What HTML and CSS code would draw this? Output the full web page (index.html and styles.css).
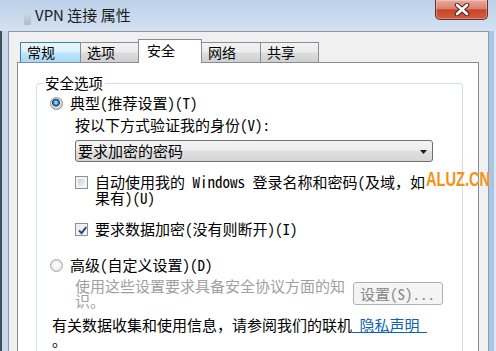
FILE: index.html
```html
<!DOCTYPE html>
<html lang="zh-CN">
<head>
<meta charset="utf-8">
<title>VPN 连接 属性</title>
<link rel="stylesheet" href="styles.css">
</head>
<body>
<div class="window">
  <div class="titlebar">
    <span class="app-icon"></span>
    <span class="title">VPN 连接 属性</span>
    <button class="close" type="button" aria-label="关闭">
      <svg width="16" height="13" viewBox="0 0 16 13">
        <path d="M3 2 L13 11 M13 2 L3 11" stroke="#4b2822" stroke-width="4.6" stroke-linecap="round" fill="none"/>
        <path d="M3 2 L13 11 M13 2 L3 11" stroke="#ffffff" stroke-width="2.6" stroke-linecap="round" fill="none"/>
      </svg>
    </button>
  </div>
  <div class="frame">
    <div class="client">
      <div class="tabs">
        <div class="tab tab-hover">常规</div>
        <div class="tab">选项</div>
        <div class="tab tab-active">安全</div>
        <div class="tab">网络</div>
        <div class="tab tab-last">共享</div>
      </div>
      <div class="panel">
        <fieldset class="group">
          <legend>安全选项</legend>
          <div class="radio-row"><span class="radio radio-on"></span><span>典型(推荐设置)(T)</span></div>
          <div class="sub">
            <div class="prompt">按以下方式验证我的身份(V):</div>
            <div class="combo">
              <span>要求加密的密码</span>
              <svg class="combo-arrow" width="7" height="4" viewBox="0 0 7 4"><path d="M0 0 H7 L3.5 4 Z" fill="#1a1a1a"/></svg>
            </div>
            <div class="check-row check-row-first"><span class="check"></span><span>自动使用我的 Windows 登录名称和密码(及域，如<br>果有)(U)</span></div>
            <div class="check-row check-row-second"><span class="check check-on"><svg width="9" height="9" viewBox="0 0 9 9"><path d="M1 4.4 L3.6 7.2 L8.2 1.2" stroke="#2c4585" stroke-width="2" fill="none"/></svg></span><span>要求数据加密(没有则断开)(I)</span></div>
          </div>
          <div class="radio-row radio-row-second"><span class="radio"></span><span>高级(自定义设置)(D)</span></div>
          <div class="advanced">
            <p class="disabled-text">使用这些设置要求具备安全协议方面的知<br>识。</p>
            <button class="btn" type="button" disabled>设置(S)...</button>
          </div>
          <p class="info">有关数据收集和使用信息，请参阅我们的联机<a href="#" class="link">&nbsp;隐私声明&nbsp;</a><br>。</p>
        </fieldset>
      </div>
    </div>
  </div>
  <div class="watermark">ALUZ.CN</div>
</div>
</body>
</html>
```

FILE: styles.css
```css
* { box-sizing: border-box; }
html, body { margin: 0; padding: 0; }
body {
  width: 496px;
  height: 351px;
  overflow: hidden;
  background: #c9d9ec;
  font-family: "Noto Sans Mono CJK SC", "Noto Sans CJK SC", sans-serif;
  font-size: 15px;
  color: #000;
}
.window {
  position: relative;
  width: 496px;
  height: 351px;
  display: flex;
  flex-direction: column;
  overflow: hidden;
  background: #c9d9ec;
}

/* title bar */
.titlebar {
  flex: none;
  height: 31px;
  display: flex;
  align-items: flex-start;
  padding-left: 24px;
  background: linear-gradient(#bcd0e8, #d4e2f0);
}
.app-icon {
  width: 7px;
  height: 12px;
  margin-top: 13px;
  border-radius: 1px;
  background: linear-gradient(#cfd6de, #a3adb9);
  opacity: 0.7;
}
.title {
  margin: 5px 0 0 4px;
  line-height: 20px;
  font-family: "Noto Sans CJK SC", sans-serif;
  font-size: 15px;
  color: #1b1b1b;
}
.close {
  margin-left: auto;
  margin-right: 8px;
  width: 53px;
  height: 20px;
  padding: 0;
  border: 1px solid #64302a;
  border-top: none;
  border-radius: 0 0 5px 5px;
  background: linear-gradient(#e8ab9c 0%, #dc806b 45%, #c8462c 52%, #d25c3f 100%);
  box-shadow: inset 0 0 0 1px rgba(255, 255, 255, 0.3);
  display: flex;
  align-items: center;
  justify-content: center;
}

/* frame + client */
.frame {
  flex: 1;
  display: flex;
  border-left: 2px solid #454d58;
  padding: 0 7px 0 6px;
  background: linear-gradient(to left, #dde8f4 0 2px, #a8c5e6 2px 7px, #c8d9ec 7px);
}
.client {
  flex: 1;
  display: flex;
  flex-direction: column;
  padding: 7px 0 0 8px;
  border: 1px solid #8d9aab;
  border-bottom: none;
  background: #f0f0f0;
}

/* tabs */
.tabs {
  flex: none;
  height: 23px;
  display: flex;
  align-items: flex-end;
  padding-left: 3px;
}
.tab {
  width: 60px;
  height: 20px;
  margin-left: -1px;
  padding-left: 6px;
  border: 1px solid #898c95;
  border-bottom: none;
  line-height: 19px;
  font-family: "Noto Sans CJK SC", sans-serif;
  font-size: 14px;
  background: linear-gradient(#f3f3f3 0%, #ebebeb 48%, #dddddd 52%, #cfcfcf 100%);
}
.tab:first-child { margin-left: 0; width: 61px; }
.tab-hover {
  border-color: #3c7fb1;
  background: linear-gradient(#eaf6fd 0%, #d9f0fc 48%, #bee6fd 52%, #a7d9f5 100%);
}
.tab-active {
  z-index: 1;
  width: 64px;
  height: 24px;
  margin-left: -2px;
  margin-bottom: -1px;
  padding-left: 8px;
  line-height: 20px;
  background: #ffffff;
}
.tab-last { width: 59px; }

/* panel */
.panel {
  flex: 1;
  width: 462px;
  border: 1px solid #898c95;
  border-bottom: none;
  background: #ffffff;
}
.group {
  margin: 10px 15px 0 18px;
  padding: 1px 0 0 0;
  min-width: 0;
  height: 400px;
  border: 1px solid #d5dfe5;
  border-radius: 3px;
}
.group legend {
  margin-left: 6px;
  padding: 0 2px;
  line-height: 20px;
  font-family: "Noto Sans CJK SC", sans-serif;
  font-size: 14.5px;
}

.radio-row {
  display: flex;
  align-items: center;
  gap: 7px;
  margin-left: 13px;
  line-height: 18px;
}
.radio-row-second { margin-top: 19px; }
.radio {
  flex: none;
  width: 13px;
  height: 13px;
  border: 1px solid #8e8f8f;
  border-radius: 50%;
  background: radial-gradient(circle, #f7f7f7 0 2.5px, #d8d8d8 5.5px);
}
.radio-row-second .radio {
  border-color: #a9aaaa;
  background: radial-gradient(circle, #fafafa 0 2.5px, #e0e0e0 5.5px);
}
.radio-on {
  background: radial-gradient(circle at 45% 42%, #9fdcf9 0 0.8px, #3b86c4 2.2px, #183f6c 3.6px, #eef0f2 4.3px, #d0d0d0 5.5px);
}

.sub { margin-left: 38px; }
.prompt { margin-top: 4px; line-height: 18px; }
.combo {
  margin-top: 6px;
  width: 358px;
  height: 22px;
  display: flex;
  align-items: center;
  justify-content: space-between;
  padding: 0 5px 0 2px;
  border: 1px solid #707070;
  border-radius: 3px;
  background: linear-gradient(#f4f4f4 0%, #ececec 48%, #dfdfdf 52%, #d6d6d6 100%);
  line-height: 20px;
}
.combo-arrow { flex: none; margin-top: 1px; }

.check-row {
  display: flex;
  align-items: flex-start;
  gap: 7px;
  line-height: 16px;
}
.check-row-first { margin-top: 12px; }
.check-row-second { margin-top: 15px; }
.check {
  flex: none;
  width: 13px;
  height: 13px;
  margin-top: 2px;
  padding: 2px;
  border: 1px solid #8e8f8f;
  background: linear-gradient(135deg, #c9ced6, #f4f5f7) content-box, #f4f4f4;
}
.check-on {
  padding: 1px;
  background: linear-gradient(135deg, #e4e7ec, #fbfbfb) content-box, #f4f4f4;
}
.check-on svg { display: block; margin: 1px 0 0 1px; }

.advanced {
  display: flex;
  align-items: flex-start;
  margin: 4px 0 0 38px;
}
.disabled-text {
  flex: none;
  width: 278px;
  margin: 0;
  line-height: 15px;
  color: #a0a0a0;
}
.btn {
  flex: none;
  width: 90px;
  height: 23px;
  margin-top: 4px;
  padding: 0 0 0 6px;
  text-align: left;
  font: inherit;
  line-height: 20px;
  color: #878787;
  border: 1px solid #adb2b5;
  border-radius: 3px;
  background: #f4f4f4;
}

.info {
  margin: 9px 0 0 15px;
  line-height: 15px;
}
.link {
  color: #0b63b8;
  text-decoration: underline;
}

.watermark {
  position: absolute;
  left: 426px;
  top: 170px;
  line-height: 1;
  font-family: "Liberation Sans", sans-serif;
  font-weight: bold;
  font-size: 19.5px;
  color: #f29219;
  transform: scaleX(0.75);
  transform-origin: left top;
  white-space: nowrap;
}
```
